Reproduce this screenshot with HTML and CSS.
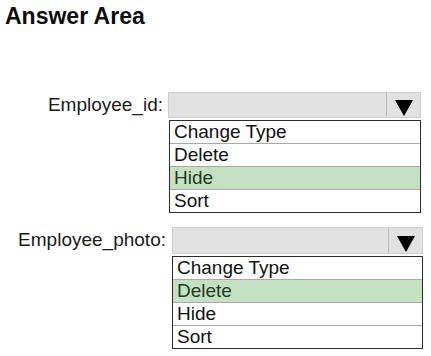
FILE: index.html
```html
<!DOCTYPE html>
<html>
<head>
<meta charset="utf-8">
<link rel="stylesheet" href="styles.css">
</head>
<body>
<div class="page">
  <h1 class="title">Answer Area</h1>

  <div class="field field--id">
    <div class="label">Employee_id:</div>
    <div class="control">
      <div class="select">
        <span class="select-value"></span>
        <span class="select-btn">
          <svg width="18" height="16" viewBox="0 0 18 16"><polygon points="0,0 18,0 9,16" fill="#000"/></svg>
        </span>
      </div>
      <ul class="options">
        <li class="option">Change Type</li>
        <li class="option">Delete</li>
        <li class="option option--selected">Hide</li>
        <li class="option">Sort</li>
      </ul>
    </div>
  </div>

  <div class="field field--photo">
    <div class="label">Employee_photo:</div>
    <div class="control">
      <div class="select">
        <span class="select-value"></span>
        <span class="select-btn">
          <svg width="18" height="16" viewBox="0 0 18 16"><polygon points="0,0 18,0 9,16" fill="#000"/></svg>
        </span>
      </div>
      <ul class="options">
        <li class="option">Change Type</li>
        <li class="option option--selected">Delete</li>
        <li class="option">Hide</li>
        <li class="option">Sort</li>
      </ul>
    </div>
  </div>
</div>
</body>
</html>
```

FILE: styles.css
```css
html, body {
  margin: 0;
  padding: 0;
  background: #fff;
}

body {
  font-family: "Liberation Sans", Arial, sans-serif;
  color: #111;
}

.page {
  padding-top: 5px;
}

.title {
  margin: 0 0 0 5px;
  font-size: 23px;
  line-height: 23px;
  font-weight: bold;
  color: #0d0d0d;
}

.field {
  display: grid;
  align-items: start;
}

.field--id {
  margin-top: 64px;
  grid-template-columns: 163px 253px;
  column-gap: 5px;
}

.field--photo {
  margin-top: 14px;
  grid-template-columns: 166px 251px;
  column-gap: 6px;
}

.label {
  text-align: right;
  font-size: 19px;
  line-height: 26px;
  color: #1a1a1a;
}

.select {
  display: flex;
  height: 26px;
  box-sizing: border-box;
  border: 1px solid #cfcfcf;
  background: #e2e2e2;
}

.select-value {
  flex: 1;
}

.select-btn {
  width: 34px;
  border-left: 1px solid #b9b9b9;
  display: flex;
  align-items: flex-end;
  justify-content: center;
  padding-bottom: 1px;
  box-sizing: border-box;
}

.field--photo .select {
  height: 27px;
}

.options {
  list-style: none;
  margin: 2px 0 0 1px;
  padding: 0;
  border: 1px solid #2b2b2b;
  background: #fff;
}

.field--photo .options {
  margin-top: 2px;
  margin-left: 0;
}

.option {
  font-size: 19px;
  line-height: 22px;
  padding-left: 4px;
  color: #111;
  border-top: 1px solid #a9a9a9;
}

.option:first-child {
  border-top: none;
}

.option--selected {
  background: #c5e1c3;
  color: #1f3a1f;
}
```
